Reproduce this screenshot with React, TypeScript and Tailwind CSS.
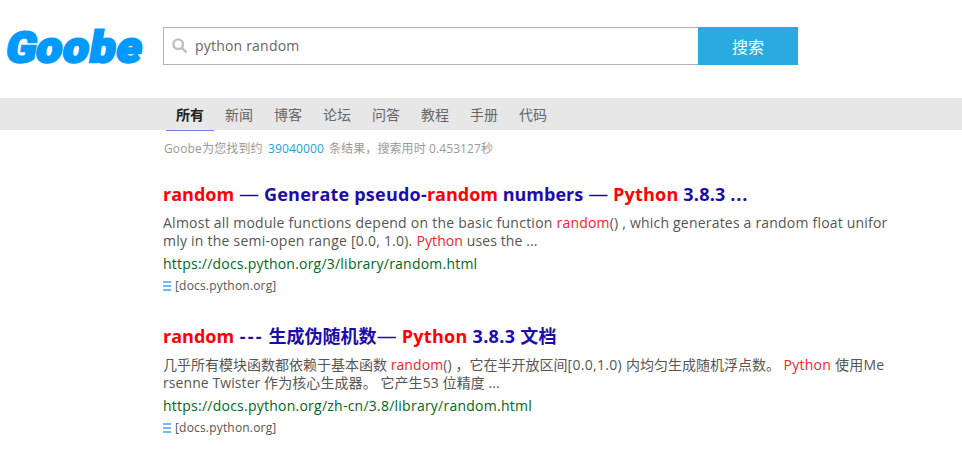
import type { ReactNode } from "react";

const tabs = ["所有", "新闻", "博客", "论坛", "问答", "教程", "手册", "代码"];

function Source() {
  return (
    <div className="mt-1 flex h-[18px] items-center text-[12px] leading-[18px] text-[#555]">
      <svg width="8" height="10" viewBox="0 0 8 10" className="mr-1 mb-px shrink-0" fill="#70b8ff" shapeRendering="crispEdges">
        <path d="M0 0h8v2H0zM0 4h8v2H0zM0 8h8v2H0z" />
      </svg>
      <span className="tracking-[0.18px]">[docs.python.org]</span>
    </div>
  );
}

function Red({ children }: { children: ReactNode }) {
  return <span className="text-[#f5222d]">{children}</span>;
}

function TitleRed({ children }: { children: ReactNode }) {
  return <span className="text-[#ff0000]">{children}</span>;
}

// Em dash stretched to a full em, with a thin stroke.
function Dash() {
  return <span className="inline-block w-[20.5px] text-center text-[20px] leading-none font-normal">—</span>;
}

export default function App() {
  return (
    <div className="h-[453px] w-[962px] overflow-hidden bg-white font-['Open_Sans','Noto_Sans_CJK_SC',sans-serif] whitespace-nowrap">
      <header className="flex h-[98px] pt-[27px]">
        <svg width="163" height="60" viewBox="0 0 163 60" className="shrink-0 overflow-visible">
          <g transform="matrix(1 0 -0.17 1 6 0)" fill="#0099ff" stroke="#0099ff" strokeWidth="2.6" fontFamily="Roboto, sans-serif" fontWeight="900">
            <text x="4.5" y="34.8" fontSize="42" textLength="30" lengthAdjust="spacingAndGlyphs">G</text>
            <text x="34.5" y="34.8" fontSize="43" letterSpacing="1" textLength="106" lengthAdjust="spacingAndGlyphs">oobe</text>
          </g>
        </svg>
        <div className="flex h-[38px] w-[535px] items-center border border-r-0 border-[#b3b3b3] pl-2">
          <svg width="16" height="16" viewBox="0 0 16 16" fill="none" stroke="#bfbfbf" strokeWidth="2.4">
            <circle cx="6.2" cy="6.2" r="4.8" />
            <path d="M9.8 9.8L14.5 14.5" />
          </svg>
          <span className="ml-[7px] pb-0.5 text-[14px] tracking-[0.2px] text-[#666]">python random</span>
        </div>
        <div className="flex h-[38px] w-[100px] items-center justify-center bg-[#29abe2] pt-0.5 text-[16px] text-white">搜索</div>
      </header>
      <nav className="flex h-8 gap-px bg-[#e7e7e7] pl-[166px]">
        {tabs.map((tab, i) => (
          <div
            key={tab}
            className={
              i === 0
                ? "h-[33px] w-12 border-b border-[#6f7fff] text-center text-[14px] leading-[34px] font-bold text-[#222]"
                : "h-8 w-12 text-center text-[14px] leading-[34px] text-[#666]"
            }
          >
            {tab}
          </div>
        ))}
      </nav>
      <main className="pl-[163px]">
        <p className="flex h-[37px] pl-px text-[12px] leading-[37px] text-[#999]">
          <span className="w-[104px] tracking-[0.15px]">Goobe为您找到约</span>
          <span className="w-[61px] tracking-[0.15px] text-[#1a9fe0]">39040000</span>
          <span className="tracking-[0.1px]">条结果，搜索用时 0.453127秒</span>
        </p>
        <article className="h-[142px] pt-[15px]">
          <h2 className="h-6 text-[18px] leading-6 font-bold text-[#1a0dab]">
            <TitleRed>random</TitleRed> <Dash /> <span className="tracking-[0.22px]">Generate pseudo-</span>
            <TitleRed>random</TitleRed> numbers <Dash />{" "}
            <span className="tracking-[0.2px]"><TitleRed>Python</TitleRed> 3.8.3 </span>
            <span className="tracking-[0.8px]">...</span>
          </h2>
          <div className="mt-2 text-[14px] leading-[18px] text-[#555]">
            <p>
              <span className="tracking-[0.245px]">Almost all module functions depend on the basic function </span>
              <span className="tracking-[0.2px]"><Red>random</Red>() , which generates a random float unifor</span>
            </p>
            <p>
              <span className="tracking-[0.23px]">mly in the semi-open range [0.0, 1.0). </span>
              <span className="tracking-[0.1px]"><Red>Python</Red> uses the ...</span>
            </p>
          </div>
          <p className="mt-[5px] h-[18px] text-[14px] leading-[18px] tracking-[0.22px] text-[#006621]">https://docs.python.org/3/library/random.html</p>
          <Source />
        </article>
        <article className="h-[142px] pt-[15px]">
          <h2 className="h-6 text-[18px] leading-6 font-bold text-[#1a0dab]">
            <TitleRed>random</TitleRed> <span className="ml-px tracking-[2.2px]">---</span> 生成伪随机数<Dash />{" "}
            <span className="tracking-[0.3px]"><TitleRed>Python</TitleRed> 3.8.3 文档</span>
          </h2>
          <div className="mt-2 text-[14px] leading-[18px] text-[#555]">
            <p>
              几乎所有模块函数都依赖于基本函数 <span className="tracking-[0.1px]"><Red>random</Red>() ，</span>
              它在半开放区间<span className="tracking-[0.3px]">[0.0,1.0) </span>内均匀生成随机浮点数。{" "}
              <span className="tracking-[0.25px]"><Red>Python</Red> 使用Me</span>
            </p>
            <p className="tracking-[0.08px]">rsenne Twister 作为核心生成器。 它产生53 位精度 ...</p>
          </div>
          <p className="mt-[5px] h-[18px] text-[14px] leading-[18px] tracking-[0.24px] text-[#006621]">https://docs.python.org/zh-cn/3.8/library/random.html</p>
          <Source />
        </article>
      </main>
    </div>
  );
}
